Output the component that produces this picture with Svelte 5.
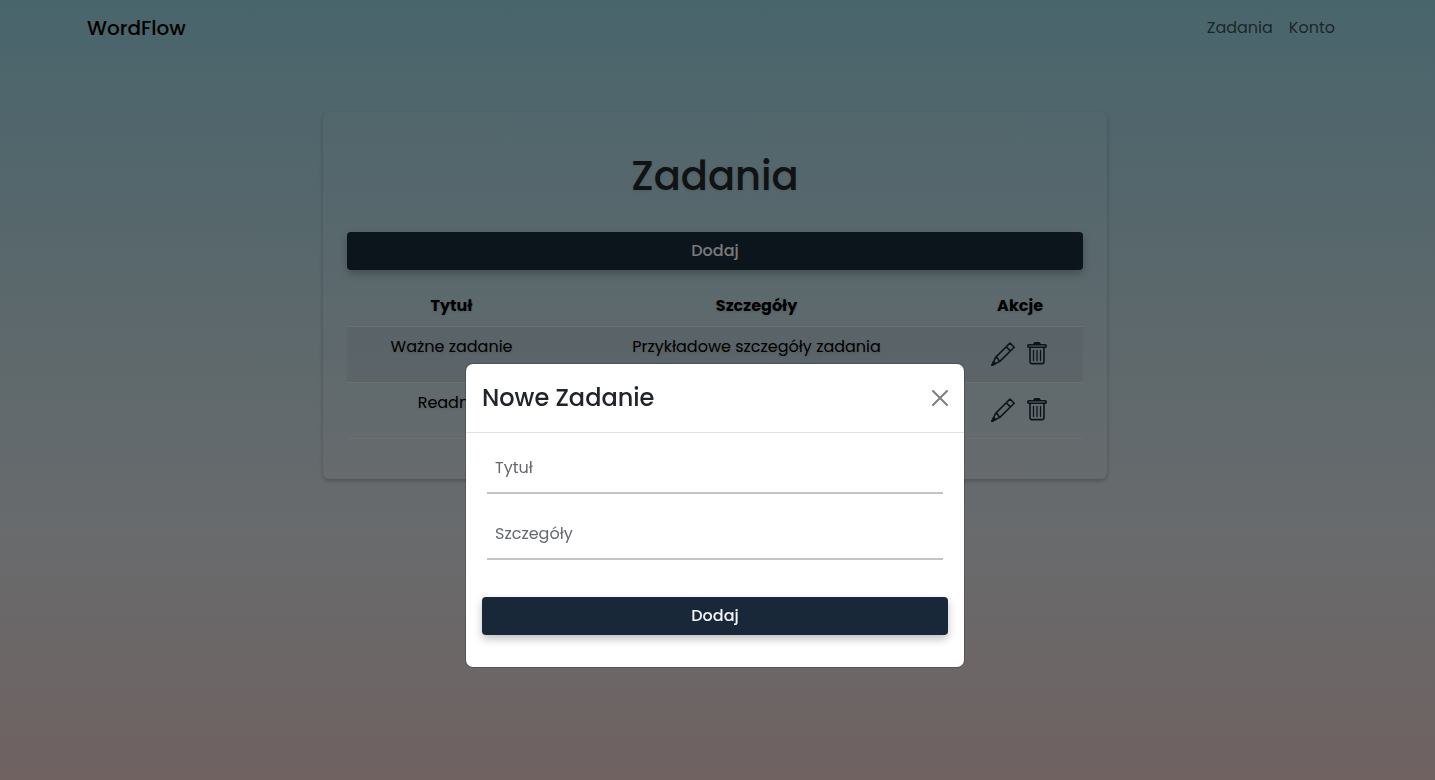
<script>
  let tasks = $state([
    { title: 'Ważne zadanie', details: 'Przykładowe szczegóły zadania' },
    { title: 'Readme', details: '' }
  ]);
  let open = $state(true);
  let title = $state('');
  let details = $state('');

  function addTask(event) {
    event.preventDefault();
    tasks.push({ title, details });
    title = '';
    details = '';
    open = false;
  }
</script>

<div class="page">
  <nav class="navbar">
    <a class="brand" href="#home">WordFlow</a>
    <div class="links">
      <a href="#tasks">Zadania</a>
      <a href="#account">Konto</a>
    </div>
  </nav>

  <main class="card">
    <h1>Zadania</h1>
    <button class="primary" type="button" onclick={() => (open = true)}>Dodaj</button>
    <table>
      <colgroup>
        <col class="col-title" />
        <col class="col-details" />
        <col class="col-actions" />
      </colgroup>
      <thead>
        <tr><th>Tytuł</th><th>Szczegóły</th><th>Akcje</th></tr>
      </thead>
      <tbody>
        {#each tasks as task, i}
          <tr>
            <td>{task.title}</td>
            <td>{task.details}</td>
            <td>
              <div class="actions">
                <button class="icon" type="button" aria-label="Edytuj">
                  <svg width="24" height="24" viewBox="0 0 24 24">
                    <path d="M19 1 L23.2 5.2 L8.8 19.4 L1 23.2 L4.6 15.4 Z M15.2 4.8 L19.3 8.9 M4.6 15.4 L6.6 16 L7.2 17.4 L8.8 19.4" />
                    <path d="M1 23.2 L2.6 19.8 L4.4 21.6 Z" fill="currentColor" />
                  </svg>
                </button>
                <button class="icon" type="button" aria-label="Usuń" onclick={() => tasks.splice(i, 1)}>
                  <svg width="20" height="24" viewBox="0 0 20 24">
                    <rect x="0.8" y="2.8" width="18.4" height="2.4" rx="1" />
                    <path d="M7 2.2 L7.6 0.8 H12.4 L13 2.2 Z" fill="currentColor" />
                    <path d="M3 5.4 V19.6 Q3 21.6 5 21.6 H15 Q17 21.6 17 19.6 V5.4" />
                    <path class="slats" d="M6.5 8.5 V18.5 M10 8.5 V18.5 M13.5 8.5 V18.5" />
                  </svg>
                </button>
              </div>
            </td>
          </tr>
        {/each}
      </tbody>
    </table>
  </main>
</div>

{#if open}
  <div class="backdrop">
    <div class="modal" role="dialog" aria-modal="true" aria-labelledby="modal-title">
      <header>
        <h2 id="modal-title">Nowe Zadanie</h2>
        <button class="close" type="button" aria-label="Zamknij" onclick={() => (open = false)}>
          <svg width="16" height="16" viewBox="0 0 16 16"><path d="M1 1 L15 15 M15 1 L1 15" /></svg>
        </button>
      </header>
      <form onsubmit={addTask}>
        <div class="fields">
          <input aria-label="Tytuł" placeholder="Tytuł" bind:value={title} />
          <input aria-label="Szczegóły" placeholder="Szczegóły" bind:value={details} />
        </div>
        <button class="primary" type="submit">Dodaj</button>
      </form>
    </div>
  </div>
{/if}

<style>
  :global(body) {
    margin: 0;
    font-family: Poppins, Inter, sans-serif;
    font-size: 16px;
    line-height: 24px;
    color: #212529;
  }
  * { box-sizing: border-box; }
  button, input { font: inherit; }
  a { text-decoration: none; }

  .page {
    min-height: 100vh;
    padding: 0 5px 32px 0;
    background: linear-gradient(#92cad8 0%, #d2d6da 68%, #dec4c2 100%);
  }
  .navbar {
    display: flex;
    align-items: center;
    justify-content: space-between;
    height: 56px;
    padding: 0 95px 0 87px;
  }
  .brand {
    color: #000;
    font-size: 20px;
    font-weight: 500;
  }
  .links { display: flex; gap: 16px; }
  .links a { color: rgba(0, 0, 0, 0.65); }

  .card {
    max-width: 784px;
    margin: 56px auto 0;
    padding: 40px 24px;
    border-radius: 6px;
    background: rgba(255, 255, 255, 0.04);
    box-shadow: 0 2px 4px rgba(0, 0, 0, 0.24);
    text-shadow: 0 1px 3px rgba(0, 0, 0, 0.12);
  }
  h1 {
    margin: 0 0 32px;
    font-size: 40px;
    line-height: 48px;
    font-weight: 500;
    text-align: center;
  }
  .primary {
    display: block;
    width: 100%;
    height: 38px;
    padding: 0;
    border: 0;
    border-radius: 4px;
    background: #192838;
    box-shadow: 0 4px 8px rgba(0, 0, 0, 0.25);
    color: #f4f4f4;
    font-weight: 500;
  }
  table {
    width: 100%;
    margin-top: 16px;
    border-collapse: separate;
    border-spacing: 0;
    table-layout: fixed;
    text-align: center;
    color: #000;
  }
  .col-title { width: 28.4%; }
  .col-details { width: 54.5%; }
  .col-actions { width: 17.1%; }
  th, td {
    padding: 8px;
    border-bottom: 1px solid #e2dcdc;
    vertical-align: top;
  }
  th { font-weight: 700; }
  td { height: 56px; }
  tbody tr:nth-child(odd) { background: rgba(20, 0, 50, 0.05); }
  .actions {
    display: flex;
    justify-content: center;
    gap: 12px;
    padding: 7px 2px 0 0;
  }
  .icon {
    display: flex;
    padding: 0;
    border: 0;
    background: none;
    color: #192838;
  }
  .icon svg {
    fill: none;
    stroke: currentColor;
    stroke-width: 1.6;
    stroke-linejoin: round;
    stroke-linecap: round;
  }
  .icon .slats { stroke-width: 1.3; }

  .backdrop {
    position: fixed;
    inset: 0;
    padding: 364px 5px 0 0;
    background: rgba(0, 0, 0, 0.5);
  }
  .modal {
    max-width: 498px;
    margin: 0 auto;
    border-radius: 7px;
    background: #fff;
    box-shadow: 0 0 0 1px rgba(0, 0, 0, 0.18);
  }
  .modal header {
    display: flex;
    align-items: center;
    justify-content: space-between;
    padding: 16px;
    border-bottom: 1px solid #dee2e6;
  }
  h2 {
    margin: 0;
    font-size: 24px;
    line-height: 36px;
    font-weight: 500;
  }
  .close {
    display: flex;
    padding: 0;
    border: 0;
    background: none;
  }
  .close path {
    fill: none;
    stroke: #7f7f7f;
    stroke-width: 2;
    stroke-linecap: round;
  }
  form { padding: 9px 16px 32px; }
  .fields {
    display: grid;
    gap: 14px;
    padding: 0 5px;
    margin-bottom: 37px;
  }
  input {
    width: 100%;
    height: 52px;
    padding: 0 8px;
    border: 0;
    border-bottom: 2px solid #c4c4c4;
    background: none;
    outline: 0;
  }
  input::placeholder { color: #65696d; opacity: 1; }
</style>
